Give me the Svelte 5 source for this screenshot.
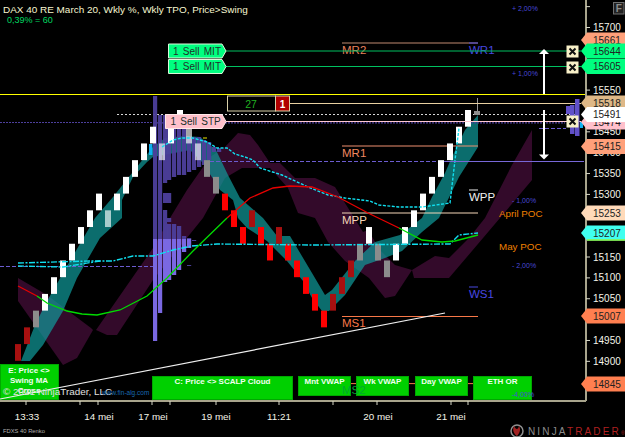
<script>
  const kY = (k) => 110 + 16.72 * k;
  const colors = { w: 'brick-w', t: 'brick-t', g: 'brick-g', r: 'brick-r', d: 'brick-d' };
  const bricks = [
    [14,'d'],[13,'d'],[12,'g'],[11,'w'],[10,'w'],[9,'w'],[8,'w'],[7,'w'],[6,'w'],[5,'w'],[6,'t'],[5,'w'],[4,'w'],[3,'w'],[2,'w'],[1,'w'],
    [2,'t'],[1,'w'],[0,'w'],[1,'t'],[2,'t'],[3,'g'],[4,'g'],[5,'r'],[6,'r'],[7,'r'],[6,'d'],[7,'r'],[8,'r'],[7,'d'],[8,'r'],[9,'r'],[10,'r'],
    [11,'r'],[12,'r'],[11,'d'],[10,'d'],[9,'d'],[8,'g'],[7,'w'],[8,'g'],[9,'g'],[8,'w'],[7,'w'],[6,'w'],[5,'w'],[4,'w'],[3,'w'],[2,'w'],[1,'w'],[0,'w']
  ];
  const profile = [
    [153,[[96,239,'a'],[239,341,'b']]],
    [158,[[115,239,'a'],[239,313,'b']]],
    [163,[[115,183,'a'],[193,203,'a'],[210,239,'a'],[239,282,'b']]],
    [167,[[115,180,'a'],[193,203,'a'],[218,222,'a'],[224,239,'a'],[239,280,'b']]],
    [172,[[115,177,'a'],[224,239,'a'],[239,275,'b']]],
    [177,[[115,175,'a'],[226,239,'a'],[239,270,'b']]],
    [182,[[115,175,'a'],[236,239,'a'],[239,252,'b']]],
    [187,[[137,172,'a'],[238,239,'a'],[239,248,'b'],[265,266,'a']]],
    [192,[[137,170,'a'],[240,241,'a'],[245,246,'a']]],
    [197,[[137,167,'a']]],
    [202,[[140,165,'a']]],
    [207,[[142,160,'a']]],
    [212,[[147,152,'a']]],
    [217,[[148,152,'a']]]
  ];
  const maroon = [
    '18,278 18,301 63,365 77,358 93,330 91,328 47,295',
    '96,330 107,335 117,335 153,280 203,218 225,178 242,168 270,168 288,188 298,213 315,218 328,242 345,261 369,278 385,298 395,296 412,270 414,278 449,278 472,251 500,218 532,180 532,130 512,165 485,218 469,238 449,258 435,256 412,270 395,265 380,250 368,230 363,232 335,187 315,178 295,178 280,163 270,163 258,145 250,135 238,133 225,147 210,157 187,190 170,218 153,248'
  ];
  const teal = '21,361 35,325 47,301 70,261 95,218 113,197 140,163 153,147 165,138 185,136 200,137 216,150 228,175 240,198 263,218 277,236 290,236 312,273 325,295 332,290 355,261 375,242 400,235 422,218 432,197 445,173 452,157 465,130 478,115 478,147 459,177 439,218 422,232 402,251 385,258 365,265 345,295 329,311 322,311 312,298 303,281 287,261 267,241 247,228 238,218 233,200 220,190 203,163 190,150 153,157 147,162 133,177 122,200 122,218 100,238 77,278 63,311 43,345 30,361';
  const cyanTop = '162,147 173,140 182,138 193,138 207,142 217,148 227,148 235,154 245,157 253,160 260,168 282,175 308,187 328,195 345,198 370,201 379,205 399,207 422,207 450,203 455,160 459,128';
  const cyanLow = '18,263 90,261 113,261 133,256 153,256 173,250 192,246 217,244 312,245 450,244 459,235 478,233';
  const cyanLow2 = '18,266 63,267 100,261';
  const red1 = '18,286 37,296';
  const green1 = '37,296 47,303 67,311 82,314 97,315 120,310 147,296 167,278 193,251 227,218';
  const red2 = '227,218 250,198 273,188 290,186 312,187 338,197 368,213 399,228';
  const green2 = '399,228 422,240 442,242 455,241 478,235';
  const levels = [
    { y: 43, c: '#c08a70', t: 'MR2', ty: 54, tc: '#e8805c' },
    { y: 146, c: '#f09070', t: 'MR1', ty: 157, tc: '#f08860' },
    { y: 213, c: '#f5d6b8', t: 'MPP', ty: 224, tc: '#f5d6b8' },
    { y: 316.5, c: '#f87848', t: 'MS1', ty: 327, tc: '#f87848' }
  ];
  const pivots = [
    { t: 'WR1', y: 54, ly: 43, c: '#4848e0' },
    { t: 'WPP', y: 201, ly: 190, c: '#f0f0f0' },
    { t: 'WS1', y: 297.5, ly: 287, c: '#4848e0' }
  ];
  const pct = [['+ 2,00%', 10.5], ['+ 1,00%', 75.5], ['- 1,00%', 203], ['- 2,00%', 268]];
  const hLines = [
    { x1: 226, x2: 581, y: 51, c: '#00c060', w: 1 },
    { x1: 226, x2: 581, y: 66.5, c: '#00c060', w: 1 },
    { x1: 0, x2: 586, y: 94.5, c: '#ffff00', w: 1 },
    { x1: 290, x2: 581, y: 103.5, c: '#e8d0a0', w: 1 },
    { x1: 226, x2: 581, y: 121.5, c: '#ffc8d0', w: 1 },
    { x1: 445, x2: 584, y: 161.5, c: '#7868d8', w: 1.2 }
  ];
  const axisPrices = [15750,15700,15650,15600,15550,15500,15450,15400,15350,15300,15250,15200,15150,15100,15050,15000,14950,14900,14850];
  const axisLabels = [15700,15550,15450,15400,15350,15300,15150,15100,15050,14950,14900];
  const priceY = (p) => 27.5 + (15700 - p) * 0.4173;
  const tags = [
    [15661, 40, '#ffa07a'], [15644, 51, '#00ff80'], [15605, 66.5, '#00ff80'], [15474, 122, '#ffc0cb'],
    [15518, 103, '#deb887'], [15491, 114.5, '#ffffff'], [15415, 146.5, '#ffa07a'], [15253, 213, '#ffdab9'],
    [15207, 233, '#40fff0'], [15007, 316, '#ff7f50'], [14845, 384, '#ff7f50']
  ];
  const tagPath = (y) => `M625 ${y-7.5}H587L581 ${y}L587 ${y+7.5}H625Z`;
  const xTicks = [26,80,98,152,170,216,279,333,377,451,468];
  const dates = [['13:33',27],['14 mei',99],['17 mei',153],['19 mei',216],['11:21',279],['20 mei',378],['21 mei',451]];
  const xButtons = [51.5, 67.5, 121.5];
  const miniProfile = [[566,106,114],[570,105,134],[575,99,136]];
  const buttons = [
    { x: 152, w: 141, h: 24, t: 'C: Price <> SCALP Cloud' },
    { x: 298, w: 53, h: 20, t: 'Mnt VWAP' },
    { x: 356, w: 53, h: 20, t: 'Wk VWAP' },
    { x: 415, w: 53, h: 20, t: 'Day VWAP' },
    { x: 473, w: 59, h: 24, t: 'ETH OR' }
  ];
</script>

<div class="chart">
  <svg class="plot" width="625" height="437" viewBox="0 0 625 437">
    {#each maroon as pts}<polygon points={pts} class="maroon" />{/each}
    <polygon points={teal} class="teal" />

    <line x1="0" x2="153" y1="122.5" y2="122.5" class="purple-dim" />
    <line x1="153" x2="565" y1="122.8" y2="122.8" class="purple-dim" />
    <line x1="210" x2="445" y1="161.5" y2="161.5" class="purple-dash" />
    <line x1="0" x2="153" y1="266.5" y2="266.5" class="purple-dash" />
    <line x1="539" x2="566" y1="128.5" y2="128.5" class="purple-dash" />
    <line x1="117" x2="581" y1="114.5" y2="114.5" class="white-dash" />

    {#each profile as [x, segs]}
      {#each segs as [a, b, k]}
        <rect x={x} y={a} width="4.2" height={b - a} class={k === 'a' ? 'prof-a' : 'prof-b'} />
      {/each}
    {/each}
    <line x1="203" x2="207" y1="138" y2="138" class="yellow-tick" />

    {#each levels as l}
      <line x1="342" x2="478" y1={l.y} y2={l.y} stroke={l.c} class="lvl" />
    {/each}
    <line x1="342" x2="478" y1="383.6" y2="383.6" stroke="#f87848" class="lvl" />

    {#each bricks as [k, c], i}
      <rect x={15 + 9 * i} y={kY(k)} width="6" height="16.7" class={colors[c]} />
    {/each}
    <rect x="149" y="144" width="3.5" height="11" class="cyan-fill" />
    <line x1="477.5" x2="477.5" y1="98" y2="111" class="wick" />
    <rect x="474" y="111" width="6" height="4" class="brick-g" />

    <polyline points={cyanLow} class="cyan dashdot" />
    <polyline points={cyanLow2} class="cyan dashdot" />
    <polyline points={cyanTop} class="cyan dashed" />
    <polyline points={red1} class="ma-red" />
    <polyline points={green1} class="ma-green" />
    <polyline points={red2} class="ma-red" />
    <polyline points={green2} class="ma-green" />

    {#each levels as l}
      <text x="342" y={l.ty} fill={l.tc} class="lvl-t">{l.t}</text>
    {/each}
    {#each pivots as p}
      <line x1="469" x2="478" y1={p.ly} y2={p.ly} stroke={p.c} class="lvl" />
      <text x="469" y={p.y} fill={p.c} class="lvl-t">{p.t}</text>
    {/each}
    <text x="499" y="216.5" class="poc">April POC</text>
    <text x="499" y="249.5" class="poc">May POC</text>

    {#each hLines as h}
      <line x1={h.x1} x2={h.x2} y1={h.y} y2={h.y} stroke={h.c} stroke-width={h.w} />
    {/each}

    <g class="arrow">
      <line x1="544" x2="544" y1="53" y2="94" />
      <polygon points="544,49 539,54 549,54" />
      <line x1="544" x2="544" y1="110" y2="155" />
      <polygon points="544,159.5 539,154.5 549,154.5" />
    </g>

    {#each pct as [t, y]}
      <text x="512" y={y} class="pct">{t}</text>
    {/each}

    <g class="buttons">
      <rect x="0.5" y="364.5" width="58" height="35" class="btn" />
      <text x="29" y="372.5" class="btn-t">E: Price &lt;&gt;</text>
      <text x="29" y="382.5" class="btn-t">Swing MA</text>
      <text x="29" y="392.5" class="btn-t">Cross</text>
      {#each buttons as b}
        <rect x={b.x + 0.5} y="376.5" width={b.w - 1} height={b.h - 1} class="btn" />
        <text x={b.x + b.w / 2} y="384" class="btn-t">{b.t}</text>
      {/each}
    </g>
    <text x="342" y="394" class="ms2">MS2</text>
    <text x="512" y="396.5" class="pct">-4,00%</text>

    <line x1="0" y1="399" x2="445" y2="313" class="trend" />
    <text x="3" y="395" class="copy">© 2021 NinjaTrader, LLC</text>
    <text x="102" y="395" class="web">www.fin-alg.com</text>

    <!-- order flags -->
    <path d="M168.5 44H222L226 51L222 58H168.5Z" class="flag-green" />
    <text x="173" y="54.5" class="flag-t">1 Sell MIT</text>
    <path d="M168.5 59.5H222L226 66.5L222 73.5H168.5Z" class="flag-green" />
    <text x="173" y="70" class="flag-t">1 Sell MIT</text>
    <path d="M165.5 114.5H222L226 121.5L222 128.5H165.5Z" class="flag-pink" />
    <text x="170.5" y="125" class="flag-t">1 Sell STP</text>

    <rect x="227.5" y="96" width="48" height="15" class="pos-box" />
    <text x="251" y="107.5" class="pos-n">27</text>
    <rect x="275.5" y="96" width="14" height="15" class="pos-red" />
    <text x="282.5" y="107.5" class="pos-q">1</text>

    {#each miniProfile as [x, a, b]}
      <rect x={x} y={a} width="4.5" height={b - a} class="mini" />
    {/each}
    <rect x="580" y="122" width="3" height="6" class="cyan-fill" />

    <!-- axes -->
    <line x1="586" x2="586" y1="0" y2="401" class="axis" />
    <line x1="0" x2="586" y1="401" y2="401" class="axis" />
    {#each axisPrices as p}
      <line x1="586" x2="590" y1={priceY(p)} y2={priceY(p)} class="tick" />
    {/each}
    {#each axisLabels as p}
      <text x="593" y={priceY(p) + 3.5} class="ax-t">{p}</text>
    {/each}
    {#each xTicks as x}
      <line x1={x} x2={x} y1="401" y2="405" class="tick" />
    {/each}
    {#each dates as [t, x]}
      <text x={x} y="420" class="date">{t}</text>
    {/each}

    {#each tags as [p, y, c]}
      <path d={tagPath(y)} fill={c} class="tag" />
      <text x="593" y={y + 3.5} class="tag-t">{p}</text>
    {/each}
    <line x1="587" x2="625" y1="240" y2="240" class="tag-rim" />

    {#each xButtons as y}
      <g>
        <rect x="567" y={y - 5.5} width="11" height="11" class="x-box" />
        <path d="M569.5 {y - 3}L575.5 {y + 3}M575.5 {y - 3}L569.5 {y + 3}" class="x-mark" />
      </g>
    {/each}

    <rect x="613.5" y="2.5" width="10.5" height="11.5" class="f-box" />
    <text x="618.8" y="12" class="f-t">F</text>

    <text x="3" y="13" class="title">DAX 40 RE March 20, Wkly %, Wkly TPO, Price&gt;Swing</text>
    <text x="7" y="23" class="sub">0,39% = 60</text>

    <text x="3" y="433" class="instr">FDXS 40 Renko</text>
    <g class="logo">
      <circle cx="517" cy="431" r="6" class="logo-ring" />
      <path d="M514 426C512 430 514 434 517 436C520 433 521 429 519 426C518 430 516 430 514 426Z" class="logo-swoosh" />
      <text x="528" y="435" class="logo-t"><tspan class="nj">NINJA</tspan><tspan class="tr">TRADER</tspan><tspan class="reg">®</tspan></text>
    </g>
  </svg>
</div>

<style>
  :global(body) { margin: 0; background: #000; }
  .chart { position: relative; width: 625px; height: 437px; background: #000; overflow: hidden; }
  .plot { display: block; }
  text { font-family: "Liberation Sans", Arial, sans-serif; }
  .maroon { fill: #330a2a; }
  .teal { fill: #10a0a0; opacity: 0.68; }
  .purple-dash { stroke: #6c5cd0; stroke-width: 1.2; stroke-dasharray: 4 2; }
  .purple-dim { stroke: #4d3f9c; stroke-width: 1.2; stroke-dasharray: 2 1; }
  .white-dash { stroke: #d8d8d8; stroke-width: 1; stroke-dasharray: 2 2; }
  .prof-a { fill: #4d3f9c; opacity: 0.95; }
  .prof-b { fill: #7a68e2; }
  .yellow-tick { stroke: #e8e800; }
  .lvl { stroke-width: 1; }
  .lvl-t { font-size: 11.5px; }
  .poc { font-size: 9.8px; fill: #f08000; }
  .brick-w { fill: #fff; }
  .brick-t { fill: #fff; fill-opacity: 0.65; }
  .brick-g { fill: #8c8c8c; }
  .brick-r { fill: #ff0000; }
  .brick-d { fill: #a81010; }
  .cyan-fill { fill: #10b0f0; }
  .wick { stroke: #999; stroke-width: 1; }
  .cyan { fill: none; stroke: #10e0f0; stroke-width: 1.4; }
  .dashed { stroke-dasharray: 3 1.5; }
  .dashdot { stroke-dasharray: 6 1.5 2 1.5; }
  .ma-red { fill: none; stroke: #e80000; stroke-width: 1.3; }
  .ma-green { fill: none; stroke: #00dc00; stroke-width: 1.3; }
  .arrow line { stroke: #fff; stroke-width: 2; }
  .arrow polygon { fill: #fff; }
  .pct { font-size: 7px; fill: #4848d8; }
  .btn { fill: #00d000; stroke: #00a800; stroke-width: 1; }
  .btn-t { font-size: 8px; font-weight: 700; fill: #f0fff0; text-anchor: middle; }
  .ms2 { font-size: 11.5px; fill: #00a830; }
  .trend { stroke: #f0f0f0; stroke-width: 1.2; }
  .copy { font-size: 9.9px; fill: #e0e0e0; }
  .web { font-size: 6.5px; fill: #1868b0; }
  .flag-green { fill: #00ff80; stroke: #d8f8d8; stroke-width: 1; }
  .flag-pink { fill: #ffc0cb; stroke: #ffe8e8; stroke-width: 1; }
  .flag-t { font-size: 10px; fill: #20302a; word-spacing: 1.5px; }
  .pos-box { fill: #000; stroke: #d8d0a8; stroke-width: 1; }
  .pos-n { font-size: 10.5px; fill: #20b020; text-anchor: middle; }
  .pos-red { fill: #b00000; stroke: #d8d0a8; stroke-width: 1; }
  .pos-q { font-size: 10px; font-weight: 700; fill: #fff; text-anchor: middle; }
  .mini { fill: #6050c8; }
  .axis { stroke: #a8a48c; stroke-width: 2; }
  .tick { stroke: #d8d8c8; stroke-width: 1; }
  .ax-t { font-size: 10px; fill: #f4f4e8; }
  .date { font-size: 9.8px; fill: #f4f4e8; text-anchor: middle; }
  .tag { stroke: none; }
  .tag-t { font-size: 10px; fill: #222; }
  .tag-rim { stroke: #90f040; stroke-width: 1.5; }
  .x-box { fill: #f8f0c8; stroke: #f8f0c8; stroke-width: 1; }
  .x-mark { stroke: #111; stroke-width: 2; fill: none; }
  .f-box { fill: #222; stroke: #707070; stroke-width: 1; }
  .f-t { font-size: 10px; font-weight: 700; fill: #8c8c8c; text-anchor: middle; }
  .title { font-size: 9.95px; fill: #f6f6d0; }
  .sub { font-size: 9px; fill: #00d860; }
  .instr { font-size: 5.8px; fill: #b0b0b0; }
  .logo-ring { fill: none; stroke: #909090; stroke-width: 1.5; }
  .logo-swoosh { fill: #a02020; }
  .logo-t { font-size: 10px; letter-spacing: 2.15px; }
  .nj { fill: #8c8c8c; }
  .tr { fill: #b02020; }
  .reg { fill: #b02020; font-size: 5px; letter-spacing: 0; }
</style>
